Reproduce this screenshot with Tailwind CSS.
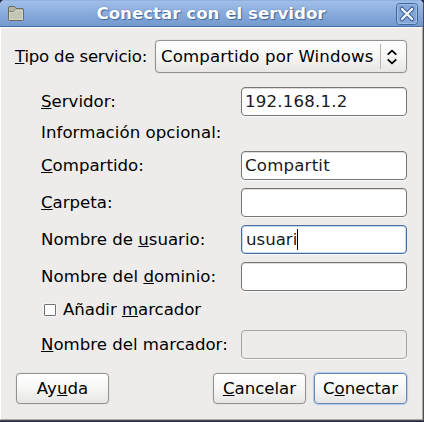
<!DOCTYPE html>
<html lang="es">
<head>
<meta charset="utf-8">
<title>Conectar con el servidor</title>
<script src="https://cdn.jsdelivr.net/npm/@tailwindcss/browser@4"></script>
</head>
<body class="w-[424px] h-[422px] overflow-hidden bg-[#1d2b50] font-['DejaVu_Sans',sans-serif] text-[16.6px] leading-[20px] text-black whitespace-nowrap [&_u]:[text-decoration-thickness:1px] [&_u]:[text-underline-offset:1px] [&_u]:[text-decoration-skip-ink:none]">
<div class="w-[424px] h-[421px] flex flex-col rounded-t-[5px] overflow-hidden bg-[#edeceb] border-r border-b border-[#4c4c4c]">
  <header class="h-[27px] shrink-0 flex items-center pl-[7px] pr-[5px] bg-linear-to-b from-[#a0bfe8] via-[#89abdc] to-[#7499cd] border-b border-[#4670a9] border-t border-t-[#90b1df]">
    <svg class="shrink-0" width="18" height="18" viewBox="0 0 18 18">
      <path d="M1.500 14.500V3Q1.500 1.500 3 1.500H7.500L9 3.500H15Q16.500 3.500 16.500 5V14.500Q16.500 15.500 15.500 15.500H2.500Q1.500 15.500 1.500 14.500Z" fill="#b5b7a5" stroke="#686d5c"/>
      <path d="M2.500 14.500V7.500H6.500L8.500 5.500H15.500V14.500Z" fill="#c4c6b5" stroke="#d3d5c7"/>
      <path d="M2.500 6.500H6L8 4.500" fill="none" stroke="#7c806d"/>
    </svg>
    <h1 class="flex-1 text-center pl-[1px] font-bold text-[16.6px] tracking-[0.030px] text-white [text-shadow:1px_1px_1px_#3f659c,0_0_1px_#4c73aa]">Conectar con el servidor</h1>
    <svg class="shrink-0" width="22" height="22" viewBox="0 0 22 22">
      <rect x=".5" y=".5" width="21" height="21" rx="3" fill="#83a6d7" stroke="#41669b"/>
      <rect x="1.500" y="1.500" width="19" height="19" rx="2" fill="none" stroke="#9dbce5"/>
      <path d="M6 6L16 16M16 6L6 16" stroke="#3d639a" stroke-width="4.500" stroke-linecap="round"/>
      <path d="M6 6L16 16M16 6L6 16" stroke="#f2f6fc" stroke-width="2.400" stroke-linecap="round"/>
    </svg>
  </header>
  <main class="flex-1 flex flex-col border-t border-l border-white border-r border-r-[#aaa9a7] border-b border-b-[#aaa9a7] pr-[15px]">
    <div class="mt-[12px] h-[33px] flex items-center justify-between pl-[14px]">
      <label class="tracking-[-0.220px]"><u>T</u>ipo de servicio:</label>
      <button class="w-[252px] h-[33px] flex items-center pl-[5px] rounded-[4px] border border-[#91918e] bg-linear-to-b from-white via-[#f6f6f5] to-[#e7e6e4] shadow-[0_0_1px_#b5b4b1]">
        <span class="flex-1 text-left tracking-[0.140px]">Compartido por Windows</span>
        <span class="h-[25px] w-px bg-[#b5b4b1]"></span>
        <svg class="ml-[6px] mr-[9px]" width="10" height="16" viewBox="0 0 10 16" fill="none" stroke="#000" stroke-width="1.800"><path d="M.7 5.700L5 1.700L9.300 5.700M.7 10.300L5 14.300L9.300 10.300"/></svg>
      </button>
    </div>
    <div class="mt-[14px] h-[29px] flex items-center justify-between pl-[40px]">
      <label><u>S</u>ervidor:</label>
      <div class="w-[166px] h-[29px] flex items-center pl-[3px] rounded-[4px] border border-[#777674] bg-white text-[#1a1a1a] tracking-[0.200px] shadow-[inset_0_1px_0_#dedddb,0_1px_0_#fafafa]">192.168.1.2</div>
    </div>
    <div class="mt-[7px] h-[20px] flex items-center pl-[40px] tracking-[0.050px]">Información opcional:</div>
    <div class="mt-[8px] h-[29px] flex items-center justify-between pl-[40px]">
      <label><u>C</u>ompartido:</label>
      <div class="w-[166px] h-[29px] flex items-center pl-[3px] rounded-[4px] border border-[#777674] bg-white text-[#1a1a1a] tracking-[0.200px] shadow-[inset_0_1px_0_#dedddb,0_1px_0_#fafafa]">Compartit</div>
    </div>
    <div class="mt-[8px] h-[29px] flex items-center justify-between pl-[40px]">
      <label><u>C</u>arpeta:</label>
      <div class="w-[166px] h-[29px] rounded-[4px] border border-[#777674] bg-white shadow-[inset_0_1px_0_#dedddb,0_1px_0_#fafafa]"></div>
    </div>
    <div class="mt-[8px] h-[29px] flex items-center justify-between pl-[40px]">
      <label>Nombre de <u>u</u>suario:</label>
      <div class="w-[166px] h-[29px] flex items-center pl-[4px] rounded-[4px] border border-[#466ea5] bg-white text-[#1a1a1a] shadow-[inset_0_0_0_1px_#c6d8ef,0_1px_0_#fafafa]">usuari<span class="w-px h-[21px] bg-black"></span></div>
    </div>
    <div class="mt-[8px] h-[29px] flex items-center justify-between pl-[40px]">
      <label class="tracking-[0.050px]">Nombre del <u>d</u>ominio:</label>
      <div class="w-[166px] h-[29px] rounded-[4px] border border-[#777674] bg-white shadow-[inset_0_1px_0_#dedddb,0_1px_0_#fafafa]"></div>
    </div>
    <div class="mt-[9px] h-[20px] flex items-center pl-[43px]">
      <span class="w-[12px] h-[12px] border border-[#737270] bg-white rounded-[1px] shadow-[0_0_0_1px_#f5f4f3]"></span>
      <label class="ml-[7px] tracking-[-0.050px]">Añadir <u>m</u>arcador</label>
    </div>
    <div class="mt-[10px] h-[29px] flex items-center justify-between pl-[40px]">
      <label><u>N</u>ombre del marcador:</label>
      <div class="w-[166px] h-[29px] rounded-[4px] border border-[#a4a3a1] bg-[#edeceb] shadow-[0_1px_0_#fafafa]"></div>
    </div>
    <div class="mt-[14px] h-[31px] flex items-center pl-[15px]">
      <button class="w-[93px] h-[31px] rounded-[4px] border border-[#91918e] bg-linear-to-b from-white via-[#f6f6f5] to-[#e7e6e4] shadow-[0_0_1px_#b5b4b1]">Ay<u>u</u>da</button>
      <button class="ml-auto w-[93px] h-[31px] rounded-[4px] border border-[#91918e] bg-linear-to-b from-white via-[#f6f6f5] to-[#e7e6e4] shadow-[0_0_1px_#b5b4b1]"><u>C</u>ancelar</button>
      <button class="ml-[8px] w-[93px] h-[31px] rounded-[4px] border border-[#6488ba] bg-linear-to-b from-white via-[#f6f6f5] to-[#e7e6e4] shadow-[0_0_1px_1px_#b3cbeb]">C<u>o</u>nectar</button>
    </div>
  </main>
</div>
</body>
</html>
